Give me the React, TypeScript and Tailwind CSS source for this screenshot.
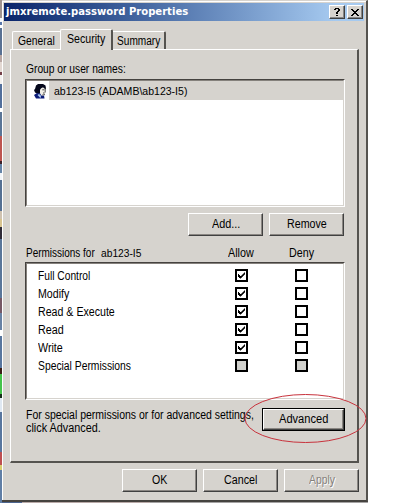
import { useLayoutEffect, useRef, useState } from "react";
import type { ReactNode } from "react";

/* One line of text condensed or widened to the width given in `w`. */
function Fit({ w, className = "", children }: { w: string; className?: string; children: ReactNode }) {
  const ref = useRef<HTMLSpanElement>(null);
  const [scale, setScale] = useState(1);
  useLayoutEffect(() => {
    const el = ref.current;
    if (el && el.parentElement) setScale(el.parentElement.clientWidth / el.offsetWidth);
  }, []);
  return (
    <span className={`block h-4 shrink-0 whitespace-nowrap leading-4 ${w} ${className}`}>
      <span ref={ref} className="inline-block origin-left" style={{ transform: `scaleX(${scale})` }}>
        {children}
      </span>
    </span>
  );
}

function Button({ label, w, className = "", pad = "pt-[2px]" }: { label: string; w: string; className?: string; pad?: string }) {
  return (
    <button
      className={`flex h-[23px] w-[75px] shrink-0 justify-center border border-t-white border-l-white border-r-[#404040] border-b-[#404040] bg-[#d6d3ce] shadow-[inset_-1px_-1px_0_#8a8682] ${pad} ${className}`}
    >
      <Fit w={w}>{label}</Fit>
    </button>
  );
}

function Check({ state }: { state: "on" | "off" | "grey" }) {
  return (
    <span className={`block size-[13px] shrink-0 border-2 border-black ${state === "grey" ? "bg-[#d0d0cc]" : "bg-white"}`}>
      {state === "on" && (
        <svg viewBox="0 0 9 9" className="block size-[9px]">
          <path
            d="M1 3h1v3h-1zM2 4h1v3h-1zM3 5h1v2.5h-1zM4 4.5h1v2.3h-1zM5 3.5h1v2.2h-1zM6 2.5h1v2.2h-1zM7 1.5h1v2.2h-1z"
            fill="#000"
          />
        </svg>
      )}
    </span>
  );
}

const permissions: { name: string; w: string; allow: "on" | "grey"; deny: "off" | "grey" }[] = [
  { name: "Full Control", w: "w-[52px]", allow: "on", deny: "off" },
  { name: "Modify", w: "w-[31px]", allow: "on", deny: "off" },
  { name: "Read & Execute", w: "w-[77px]", allow: "on", deny: "off" },
  { name: "Read", w: "w-[26px]", allow: "on", deny: "off" },
  { name: "Write", w: "w-[25px]", allow: "on", deny: "off" },
  { name: "Special Permissions", w: "w-[93px]", allow: "grey", deny: "grey" },
];

function UserIcon() {
  return (
    <svg viewBox="0 0 14 16" className="ml-[6px] h-4 w-[14px] shrink-0">
      <path d="M3 2.5 5 1h5l2.5 1.5.5 3-1 1-2-2-2 2-.5 4L5 11 2 9.5 1 7l1-1z" fill="#05081c" />
      <path d="M7 6.5 8.5 5l1.5-.5L12 6l.5 3-1 2.5L9 12l-2-1.5z" fill="#f0eee6" />
      <path d="M9.3 6.8h2M10 10h1.6M12.2 5.5v4M9 12.2l3-.6" stroke="#222" strokeWidth=".8" />
      <path d="M1 12l3-2 3 .5 2 2.5 2-.5.5 3H3z" fill="#0b1b78" />
      <path d="M4.5 12l3 3.2.6-2.4L6 11z" fill="#a9c6ee" />
    </svg>
  );
}

const backdrop: string[] = [
  "h-[18px] bg-[#a09490]",
  "h-[4px] bg-[#f4f7fb]",
  "h-[3px] bg-[#5876a8]",
  "h-[3px] bg-white",
  "h-[27px] bg-[#587092]",
  "h-[7px] bg-[#b9a7a3]",
  "h-[10px] bg-[#e2d8d2]",
  "h-[3px] bg-[#733f48]",
  "h-[9px] bg-[#f2f0ee]",
  "h-[24px] bg-[#526f9b]",
  "h-[4px] bg-white",
  "h-[24px] bg-[#5a7596]",
  "h-[25px] bg-[#bd5550]",
  "h-[3px] bg-[#3c2026]",
  "h-[9px] bg-[#6584a7]",
  "h-[7px] bg-[#f2f5f8]",
  "h-[31px] bg-[#557092]",
  "h-[8px] bg-[#cfc2b0]",
  "h-[8px] bg-[#d8c490]",
  "h-[12px] bg-[#302c38]",
  "h-[59px] bg-[#5a7699]",
  "h-[15px] bg-[#765865]",
  "h-[17px] bg-[#6882a4]",
  "h-[6px] bg-white",
  "h-[32px] bg-[#58769e]",
  "h-[6px] bg-[#3c1d16]",
  "h-[20px] bg-[#45c34b]",
  "h-[4px] bg-[#17301a]",
  "h-[14px] bg-[#dfe8f2]",
  "h-[40px] bg-[#58769e]",
  "h-[13px] bg-[#bd4f51]",
  "h-[5px] bg-[#d8cd70]",
  "h-[33px] bg-[#607ea5]",
];

const bevelField = "border border-t-[#45423f] border-l-[#45423f] border-r-white border-b-white bg-white";
const innerBevel = "border border-t-[#85817c] border-r-[#d6d3ce] border-b-[#d6d3ce] border-l-[#85817c]";
const captionButton =
  "flex h-[14px] w-4 items-center justify-center border border-t-white border-l-white border-r-[#404040] border-b-[#404040] bg-[#d6d3ce] shadow-[inset_-1px_-1px_0_#858585]";

export default function App() {
  return (
    <div className="relative flex h-[503px] w-[400px] overflow-hidden bg-white font-['Liberation_Sans',Arial,sans-serif] text-[12px] text-black">
      <div className="w-[2px] shrink-0 overflow-hidden">
        {backdrop.map((c, i) => (
          <div key={i} className={c} />
        ))}
      </div>

      <div className="flex h-[503px] w-[366px] shrink-0 flex-col">
        <div className="flex h-[502px] flex-col border-t border-r-2 border-b-2 border-t-[#d6d3ce] border-r-[#55534f] border-b-[#45433f] bg-[#d6d3ce]">
          <div className="h-full border-t border-l border-white pt-px pl-px">
            {/* Title bar */}
            <div className="flex h-[18px] w-[360px] items-start bg-linear-to-r from-[#0a246a] to-[#a6caf0] to-92% pt-[2px] pl-[2px] text-white">
              <Fit w="w-[182px]" className="-mt-px font-['DejaVu_Sans',sans-serif] text-[11px] font-bold">
                jmxremote.password Properties
              </Fit>
              <div className="ml-auto flex gap-[2px] pr-px text-black">
                <button className={captionButton}>
                  <svg viewBox="0 0 8 10" className="h-[10px] w-2" shapeRendering="crispEdges">
                    <path d="M2 1h4v1h-4zM1 2h2v1h-2zM5 2h2v2h-2zM4 4h2v1h-2zM3 5h2v2h-2zM3 8h2v1h-2z" />
                  </svg>
                </button>
                <button className={captionButton}>
                  <svg viewBox="0 0 8 7" className="h-[7px] w-2" shapeRendering="crispEdges">
                    <path d="M0 0h2v1h-2zM6 0h2v1h-2zM1 1h2v1h-2zM5 1h2v1h-2zM2 2h4v1h-4zM3 3h2v1h-2zM2 4h4v1h-4zM1 5h2v1h-2zM5 5h2v1h-2zM0 6h2v1h-2zM6 6h2v1h-2z" />
                  </svg>
                </button>
              </div>
            </div>

            {/* Tabs */}
            <div className="mt-2 ml-2 flex h-5 items-end">
              <div className="flex h-[18px] w-12 justify-center rounded-tl-[2px] border-t border-l border-white pt-px">
                <Fit w="w-[37px]">General</Fit>
              </div>
              <div className="z-10 -mb-px flex h-[21px] w-[53px] justify-center rounded-t-[2px] border-t border-r-2 border-l border-t-white border-r-[#55534f] border-l-white bg-[#d6d3ce] pt-px">
                <Fit w="w-[38px]">Security</Fit>
              </div>
              <div className="flex h-[18px] w-[53px] justify-center rounded-tr-[2px] border-t border-r-2 border-t-white border-r-[#55534f] pt-px">
                <Fit w="w-[43px]">Summary</Fit>
              </div>
            </div>

            {/* Security page */}
            <div className="ml-[6px] h-[414px] w-[349px] border-t border-r-2 border-b-2 border-l border-t-white border-r-[#55534f] border-b-[#55534f] border-l-white pt-[11px] pl-[14px]">
              <Fit w="w-[100px]" className="ml-px">Group or user names:</Fit>
              <div className={`mt-[2px] h-[128px] w-[320px] ${bevelField}`}>
                <div className={`h-full ${innerBevel}`}>
                  <div className="flex h-[19px] items-center">
                    <UserIcon />
                    <div className="ml-[2px] h-[19px] grow bg-[#d6d3ce] pt-[2px] pl-[5px] text-[11px]">
                      <Fit w="w-[133px]">ab123-I5 (ADAMB\ab123-I5)</Fit>
                    </div>
                  </div>
                </div>
              </div>
              <div className="mt-[6px] flex gap-[6px] pl-[163px]">
                <Button label="Add..." w="w-[28px]" />
                <Button label="Remove" w="w-[40px]" />
              </div>
              <div className="mt-[9px] flex pl-px">
                <Fit w="w-[69px]">Permissions for</Fit>
                <Fit w="w-[40px]" className="ml-[6px] text-[11px]">ab123-I5</Fit>
                <Fit w="w-[26px]" className="ml-[87px]">Allow</Fit>
                <Fit w="w-[25px]" className="ml-[35px]">Deny</Fit>
              </div>
              <div className={`mt-px h-[138px] w-[320px] ${bevelField}`}>
                <div className={`h-full pt-[4px] ${innerBevel}`}>
                  {permissions.map((p) => (
                    <div key={p.name} className="flex h-[18px]">
                      <div className="w-[208px] pl-[11px]">
                        <Fit w={p.w}>{p.name}</Fit>
                      </div>
                      <div className="flex gap-[47px] pt-px">
                        <Check state={p.allow} />
                        <Check state={p.deny} />
                      </div>
                    </div>
                  ))}
                </div>
              </div>
              <div className="mt-[7px] flex items-start">
                <div className="w-[237px] pl-px">
                  <Fit w="w-[228px]">For special permissions or for advanced settings,</Fit>
                  <Fit w="w-[75px]" className="-mt-[3px]">click Advanced.</Fit>
                </div>
                <div className="mt-px border border-black">
                  <Button label="Advanced" w="w-[49px]" pad="pt-px" className="!h-[21px] !w-[81px]" />
                </div>
              </div>
            </div>

            {/* Dialog buttons */}
            <div className="mt-[6px] flex gap-[6px] pl-[118px]">
              <Button label="OK" w="w-[15px]" />
              <Button label="Cancel" w="w-[33px]" />
              <Button label="Apply" w="w-[26px]" className="text-[#85817c] [text-shadow:1px_1px_0_white]" />
            </div>
          </div>
        </div>
        <div className="flex h-px">
          <div className="w-5 bg-[#4c6590]" />
          <div className="w-[128px] bg-[#b9aaa8]" />
          <div className="w-[218px] bg-[#a5a3a3]" />
        </div>
      </div>

      {/* Hand-drawn highlight round the Advanced button */}
      <svg viewBox="0 0 124 52" className="absolute top-[393px] left-[244px] h-[52px] w-[124px]">
        <ellipse cx="61.5" cy="25.5" rx="60.5" ry="24" fill="none" stroke="#c8323c" />
      </svg>
    </div>
  );
}
